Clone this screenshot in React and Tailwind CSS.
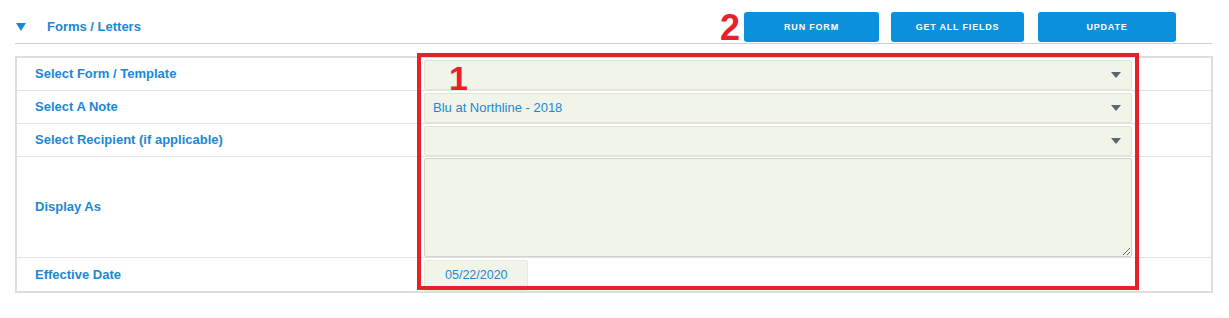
import React from "react";

const blue = "text-[#1a88d6]";

const Arrow = () => (
  <svg width="10" height="6" viewBox="0 0 10 6" className="mr-[10px]">
    <polygon points="0,0 10,0 5,6" fill="#5c6670" />
  </svg>
);

const SelectBox = ({ value }) => (
  <div className="flex h-[30px] w-[708px] items-center justify-between rounded-[2px] border border-[#dfe5cf] bg-[#f1f4e9] pl-[8px]">
    <span className={`text-[13px] ${blue}`}>{value}</span>
    <Arrow />
  </div>
);

const Row = ({ label, children, className = "h-[33px]", last }) => (
  <div className={`flex ${className} ${last ? "" : "border-b border-[#e2e2e2]"}`}>
    <div className={`flex w-[407px] items-center pl-[18px] text-[13px] font-bold ${blue}`}>
      {label}
    </div>
    <div className="w-[708px]">{children}</div>
    <div className="flex-1" />
  </div>
);

export default function App() {
  const buttons = ["RUN FORM", "GET ALL FIELDS", "UPDATE"];

  return (
    <div className="relative h-[318px] w-[1229px] bg-white font-['Liberation_Sans',Arial,sans-serif]">
      {/* header */}
      <div className="ml-[15px] flex h-[44px] w-[1197px] items-end border-b border-[#cfcfcf] pb-[1px]">
        <div className="flex h-[30px] flex-1 items-center">
          <svg width="10" height="8" viewBox="0 0 10 8" className="ml-[1px]">
            <polygon points="0,0 10,0 5,8" fill="#1a88d6" />
          </svg>
          <span className={`ml-[21px] text-[13px] font-bold ${blue}`}>Forms / Letters</span>
        </div>
        <div className="mr-[36px] flex gap-[12px]">
          {buttons.map((b, i) => (
            <button
              key={b}
              className={`h-[30px] rounded-[3px] bg-[#0b90dc] pt-[2px] text-[9px] font-bold tracking-[0.8px] text-white ${
                i === 0 ? "ml-[2px] w-[135px]" : i === 2 ? "ml-[2px] w-[138px]" : "w-[133px]"
              }`}
            >
              {b}
            </button>
          ))}
        </div>
      </div>

      {/* table */}
      <div className="ml-[15px] mt-[12px] w-[1198px] border-2 border-[#dedede]">
        <Row label="Select Form / Template">
          <div className="pt-[2px]">
            <SelectBox value="" />
          </div>
        </Row>
        <Row label="Select A Note">
          <div className="pt-[2px]">
            <SelectBox value="Blu at Northline - 2018" />
          </div>
        </Row>
        <Row label="Select Recipient (if applicable)">
          <div className="pt-[2px]">
            <SelectBox value="" />
          </div>
        </Row>
        <Row label="Display As" className="h-[101px]">
          <textarea
            readOnly
            className="mt-[1px] block h-[99px] w-[708px] rounded-[2px] border border-[#cfd3c8] bg-[#f1f4e9] outline-none"
          />
        </Row>
        <Row label="Effective Date" last>
          <div className="pt-[2px]">
            <div className="flex h-[31px] w-[104px] items-center rounded-[2px] border border-[#e6ead9] bg-[#f1f4e9] pl-[20px]">
              <span className={`text-[12.5px] ${blue}`}>05/22/2020</span>
            </div>
          </div>
        </Row>
      </div>

      {/* annotations */}
      <div className="pointer-events-none absolute left-[417px] top-[53px] h-[237px] w-[722px] border-4 border-[#e8202a]" />
      <span className="absolute left-[449px] top-[61px] text-[34px] font-bold leading-none text-[#e8202a]">1</span>
      <span className="absolute left-[720px] top-[10px] text-[36px] font-bold leading-none text-[#e8202a]">2</span>
    </div>
  );
}
